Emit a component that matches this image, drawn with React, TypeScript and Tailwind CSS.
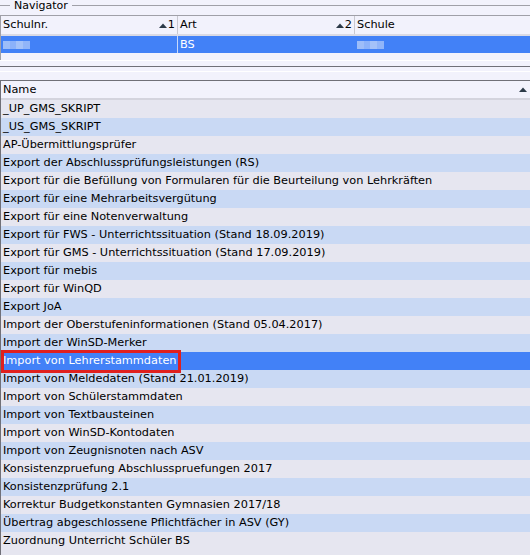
import React from "react";

const rows = [
  "_UP_GMS_SKRIPT",
  "_US_GMS_SKRIPT",
  "AP-Übermittlungsprüfer",
  "Export der Abschlussprüfungsleistungen (RS)",
  "Export für die Befüllung von Formularen für die Beurteilung von Lehrkräften",
  "Export für eine Mehrarbeitsvergütung",
  "Export für eine Notenverwaltung",
  "Export für FWS - Unterrichtssituation (Stand 18.09.2019)",
  "Export für GMS - Unterrichtssituation (Stand 17.09.2019)",
  "Export für mebis",
  "Export für WinQD",
  "Export JoA",
  "Import der Oberstufeninformationen (Stand 05.04.2017)",
  "Import der WinSD-Merker",
  "Import von Lehrerstammdaten",
  "Import von Meldedaten (Stand 21.01.2019)",
  "Import von Schülerstammdaten",
  "Import von Textbausteinen",
  "Import von WinSD-Kontodaten",
  "Import von Zeugnisnoten nach ASV",
  "Konsistenzpruefung Abschlusspruefungen 2017",
  "Konsistenzprüfung 2.1",
  "Korrektur Budgetkonstanten Gymnasien 2017/18",
  "Übertrag abgeschlossene Pflichtfächer in ASV (GY)",
  "Zuordnung Unterricht Schüler BS",
];

function Tri() {
  return (
    <svg width="8" height="5" viewBox="0 0 8 5" className="inline-block">
      <path d="M0 5 L4 0.5 L8 5 Z" fill="#2c3a48" />
    </svg>
  );
}

function Blob() {
  return (
    <div className="flex h-[8px] w-[27px]">
      <div className="h-full w-[7px] bg-[#9dbdf9]" />
      <div className="h-full w-[6px] bg-[#8cb2fa]" />
      <div className="h-full w-[7px] bg-[#a4c2f9]" />
      <div className="h-full w-[7px] bg-[#91b5f9]" />
    </div>
  );
}

export default function App() {
  return (
    <div
      className="relative h-[555px] w-[530px] overflow-hidden bg-[#f2f2fc] text-[11.3px] text-black"
      style={{ fontFamily: '"DejaVu Sans", sans-serif' }}
    >
      {/* legend */}
      <div className="relative h-[15px]">
        <div className="absolute left-0 top-[5px] h-px w-[10px] bg-[#a0a0a8]" />
        <div className="absolute left-[72px] right-0 top-[5px] h-px bg-[#a0a0a8]" />
        <div className="absolute left-[14px] top-0 text-[11px] leading-[12px]">Navigator</div>
      </div>
      {/* top table */}
      <div className="border-l border-t border-[#a0a0a8]">
        <div className="flex h-[18px] leading-[18px]">
          <div className="flex w-[177px] items-center border-r border-[#c8c8d0] pl-[2px]">
            <span className="flex-1">Schulnr.</span>
            <Tri />
            <span className="ml-[1px] mr-[2px]">1</span>
          </div>
          <div className="flex w-[177px] items-center border-r border-[#c8c8d0] pl-[2px]">
            <span className="flex-1">Art</span>
            <Tri />
            <span className="ml-[1px] mr-[2px]">2</span>
          </div>
          <div className="flex-1 pl-[2px]">Schule</div>
        </div>
        <div className="h-[2px] bg-[#dadae4]" />
        <div className="flex h-[17px] bg-[#4281f7] leading-[17px] text-white">
          <div className="flex w-[177px] items-center border-r border-[#c8d8fb] pl-[2px]">
            <Blob />
          </div>
          <div className="w-[177px] border-r border-[#4281f7] pl-[2px]">BS</div>
          <div className="flex flex-1 items-center pl-[2px]">
            <Blob />
          </div>
        </div>
        <div className="h-[7px]" />
      </div>
      {/* splitter */}
      <div className="h-px bg-white" />
      <div className="h-[5px]" />
      <div className="h-px bg-[#707078]" />
      <div className="h-[4px]" />
      <div className="h-px bg-white" />
      <div className="h-[8px]" />
      {/* bottom table */}
      <div className="border-l border-t border-[#707078]">
        <div className="flex h-[17px] items-center leading-[17px]">
          <span className="flex-1 pl-[2px]">Name</span>
          <span className="mr-[3px] flex items-center">
            <Tri />
          </span>
        </div>
        <div className="h-[2px] bg-[#d4d4de]" />
        {rows.map((r, i) => {
          const sel = i === 14;
          const bg = sel ? "bg-[#4281f7] text-white" : i % 2 === 0 ? "bg-[#e6e6f0]" : "bg-[#c9d9f4]";
          return (
            <div key={i} className={`relative h-[18px] whitespace-nowrap pl-[2px] leading-[18px] ${bg}`}>
              {r}
              {sel && (
                <div className="absolute left-0 top-[-2px] z-10 h-[23px] w-[180px] border-[3px] border-[#e0201e]" />
              )}
            </div>
          );
        })}
        <div className="h-[10px] bg-[#e6e6f0]" />
      </div>
    </div>
  );
}
